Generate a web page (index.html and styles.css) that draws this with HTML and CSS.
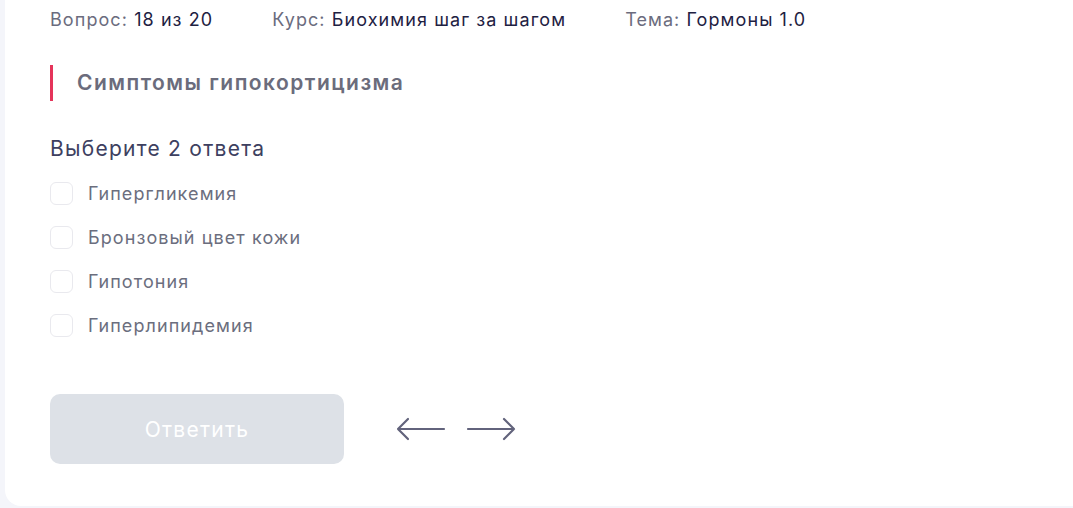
FILE: index.html
```html
<!DOCTYPE html>
<html lang="ru">
<head>
  <meta charset="UTF-8" />
  <meta name="viewport" content="width=device-width, initial-scale=1.0"/>
  <title>Тест</title>
  <link rel="stylesheet" href="styles.css">
</head>
<body>
  <div class="card">
    <!-- Meta row -->
    <div class="meta">
      <span class="meta-item">Вопрос: <b>18 из 20</b></span>
      <span class="meta-item">Курс: <b>Биохимия шаг за шагом</b></span>
      <span class="meta-item">Тема: <b>Гормоны 1.0</b></span>
    </div>

    <h2 class="question">Симптомы гипокортицизма</h2>

    <p class="hint">Выберите 2 ответа</p>
    <div class="answers">
      <label class="answer"><input type="checkbox"><span class="box"></span>Гипергликемия</label>
      <label class="answer"><input type="checkbox"><span class="box"></span>Бронзовый цвет кожи</label>
      <label class="answer"><input type="checkbox"><span class="box"></span>Гипотония</label>
      <label class="answer"><input type="checkbox"><span class="box"></span>Гиперлипидемия</label>
    </div>

    <div class="actions">
      <button class="submit" disabled>Ответить</button>
      <div class="nav">
        <button class="arrow" title="Назад">
          <svg width="50" height="26" viewBox="0 0 50 26" fill="none" stroke="#62637c" stroke-width="2.2" stroke-linecap="round" stroke-linejoin="round">
            <path d="M48 13H2M12 3L2 13l10 10"/>
          </svg>
        </button>
        <button class="arrow" title="Вперёд">
          <svg width="50" height="26" viewBox="0 0 50 26" fill="none" stroke="#62637c" stroke-width="2.2" stroke-linecap="round" stroke-linejoin="round">
            <path d="M2 13h46M38 3l10 10-10 10"/>
          </svg>
        </button>
      </div>
    </div>
  </div>
</body>
</html>
```

FILE: styles.css
```css
* {
  margin: 0;
  padding: 0;
  box-sizing: border-box;
  font-family: Inter, "Noto Sans", sans-serif;
  letter-spacing: 0.06em;
}
body {
  background: #f4f5fa;
  padding-left: 5px;
  height: 508px;
  overflow: hidden;
}
.card {
  background: #fff;
  height: 516px;
  border-radius: 0 0 0 16px;
  margin-top: -10px;
  padding: 19px 0 0 45px;
}
.meta {
  display: flex;
  gap: 59px;
  font-size: 18px;
  line-height: 22px;
  color: #6b6c7e;
}
.meta b {
  font-weight: 400;
  color: #1e2142;
}
.question {
  margin-top: 34px;
  border-left: 3px solid #e5345a;
  padding-left: 24px;
  font-size: 21px;
  letter-spacing: 0.07em;
  line-height: 36px;
  font-weight: 600;
  color: #6b6c7c;
}
.hint {
  margin-top: 35px;
  font-size: 21px;
  line-height: 26px;
  color: #3d4060;
}
.answers {
  margin-top: 20px;
  display: flex;
  flex-direction: column;
  gap: 21px;
}
.answer {
  display: flex;
  align-items: center;
  gap: 15px;
  font-size: 18px;
  line-height: 23px;
  color: #6b6e7e;
  cursor: pointer;
}
.answer input {
  display: none;
}
.box {
  width: 23px;
  height: 23px;
  border: 1.5px solid #e9e9ee;
  border-radius: 6px;
}
.actions {
  margin-top: 57px;
  display: flex;
  align-items: center;
  gap: 52px;
}
.submit {
  width: 294px;
  height: 70px;
  background: #dde1e7;
  border: none;
  border-radius: 10px;
  color: #fff;
  font-size: 21px;
}
.nav {
  display: flex;
  gap: 20px;
}
.arrow {
  background: none;
  border: none;
  cursor: pointer;
  display: flex;
}
```
